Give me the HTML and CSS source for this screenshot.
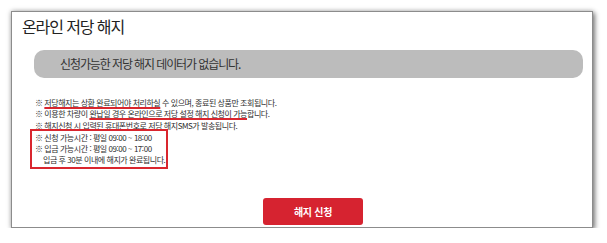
FILE: index.html
```html
<!DOCTYPE html>
<html lang="ko">
<head>
<meta charset="utf-8">
<title>온라인 저당 해지</title>
<link rel="stylesheet" href="styles.css">
</head>
<body>
<div class="panel">
  <h1 class="title">온라인 저당 해지</h1>
  <div class="empty-bar">신청가능한 저당 해지 데이터가 없습니다.</div>
  <div class="notes">
    <p class="note">※ <span class="mark">저당해지는 상환 완료되어야 처리하실</span> 수 있으며, 종료된 상품만 조회됩니다.</p>
    <p class="note">※ 이용한 차량이 <span class="mark">완납일 경우 온라인으로 저당 설정 해지 신청이 가능</span>합니다.</p>
    <p class="note">※ 해지신청 시 입력된 휴대폰번호로 저당 해지SMS가 발송됩니다.</p>
    <div class="highlight">
      <p class="note">※ 신청 가능시간 : 평일 09:00 ~ 18:00</p>
      <p class="note">※ 입금 가능시간 : 평일 09:00 ~ 17:00</p>
      <p class="note indent">입금 후 30분 이내에 해지가 완료됩니다.</p>
    </div>
  </div>
  <div class="actions">
    <button class="btn-primary" type="button">해지 신청</button>
  </div>
</div>
</body>
</html>
```
FILE: styles.css
```css
html, body {
  margin: 0;
  padding: 0;
  background: #ffffff;
}
body {
  font-family: "Noto Sans CJK KR", "Noto Sans", sans-serif;
  color: #333;
  padding: 11px 0 0 11px;
}
.panel {
  box-sizing: border-box;
  width: 582px;
  height: 217px;
  border: 1px solid #8c8c8c;
  background: #fff;
  box-shadow: 2px 2px 5px rgba(0, 0, 0, 0.45), 0 0 5px rgba(0, 0, 0, 0.25);
  display: flex;
  flex-direction: column;
}
.title {
  margin: 4px 0 0 10px;
  font-size: 16px;
  line-height: 20px;
  font-weight: 400;
  letter-spacing: -1.1px;
  color: #222;
}
.empty-bar {
  margin: 14px 9px 0 22px;
  height: 28px;
  line-height: 28px;
  background: #bcbcbc;
  border-radius: 10px;
  padding-left: 26px;
  font-size: 12px;
  letter-spacing: -1.1px;
  color: #333;
}
.notes {
  margin: 19px 0 0 23px;
  display: flex;
  flex-direction: column;
  align-items: flex-start;
}
.note {
  margin: 0;
  font-size: 8px;
  line-height: 11.3px;
  letter-spacing: -0.45px;
  color: #2e2e2e;
  white-space: nowrap;
}
.mark {
  text-decoration: underline;
  text-decoration-color: #d9262e;
  text-decoration-thickness: 1.5px;
  text-underline-offset: 1px;
}
.highlight {
  margin-left: -3px;
  padding: 1px 1px 1px 3px;
  outline: 2px solid #d9262e;
}
.indent {
  padding-left: 8px;
}
.actions {
  display: flex;
  margin-top: 31px;
  padding-left: 251px;
}
.btn-primary {
  width: 100px;
  height: 27px;
  border: 0;
  border-radius: 3px;
  background: #d62330;
  color: #fff;
  font-family: "Noto Sans CJK KR", "Noto Sans", sans-serif;
  font-size: 10px;
  font-weight: 700;
  letter-spacing: -0.3px;
  padding: 0;
}
```
